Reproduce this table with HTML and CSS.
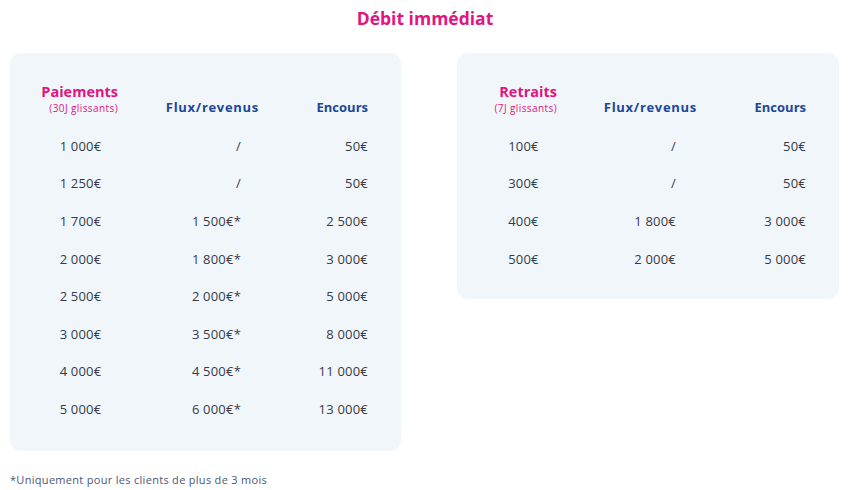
FILE: index.html
```html
<!DOCTYPE html>
<html lang="fr">
<head>
<meta charset="utf-8">
<title>Débit immédiat</title>
<link rel="stylesheet" href="styles.css">
</head>
<body>
<h1 class="title">Débit immédiat</h1>
<div class="cards">
  <section class="card card-left">
    <div class="grid">
      <div class="hcell h1"><span class="hmain">Paiements</span><span class="hsub">(30J glissants)</span></div>
      <div class="hcell h2">Flux/revenus</div>
      <div class="hcell h3">Encours</div>

      <div class="c1">1 000€</div><div class="c2">/</div><div class="c3">50€</div>
      <div class="c1">1 250€</div><div class="c2">/</div><div class="c3">50€</div>
      <div class="c1">1 700€</div><div class="c2">1 500€*</div><div class="c3">2 500€</div>
      <div class="c1">2 000€</div><div class="c2">1 800€*</div><div class="c3">3 000€</div>
      <div class="c1">2 500€</div><div class="c2">2 000€*</div><div class="c3">5 000€</div>
      <div class="c1">3 000€</div><div class="c2">3 500€*</div><div class="c3">8 000€</div>
      <div class="c1">4 000€</div><div class="c2">4 500€*</div><div class="c3">11 000€</div>
      <div class="c1">5 000€</div><div class="c2">6 000€*</div><div class="c3">13 000€</div>
    </div>
  </section>
  <section class="card card-right">
    <div class="grid">
      <div class="hcell h1"><span class="hmain">Retraits</span><span class="hsub">(7J glissants)</span></div>
      <div class="hcell h2">Flux/revenus</div>
      <div class="hcell h3">Encours</div>

      <div class="c1">100€</div><div class="c2">/</div><div class="c3">50€</div>
      <div class="c1">300€</div><div class="c2">/</div><div class="c3">50€</div>
      <div class="c1">400€</div><div class="c2">1 800€</div><div class="c3">3 000€</div>
      <div class="c1">500€</div><div class="c2">2 000€</div><div class="c3">5 000€</div>
    </div>
  </section>
</div>
<p class="note">*Uniquement pour les clients de plus de 3 mois</p>
</body>
</html>
```
FILE: styles.css
```css
* { box-sizing: border-box; }
html, body { margin: 0; padding: 0; background: #ffffff; }
body {
  font-family: "Open Sans", "Noto Sans", "Liberation Sans", sans-serif;
  width: 850px;
  height: 490px;
  overflow: hidden;
}
.title {
  margin: 0;
  padding-top: 7px;
  height: 53px;
  text-align: center;
  font-size: 17.5px;
  line-height: 22px;
  font-weight: 700;
  color: #e2147f;
}
.cards {
  display: flex;
  align-items: flex-start;
  gap: 56px;
  padding-left: 10px;
}
.card {
  background: #f1f6fb;
  border-radius: 11px;
  padding: 30px 33px 23px 0;
}
.card-left { width: 391px; }
.card-right { width: 382px; padding-bottom: 22px; }

.grid {
  display: grid;
  grid-auto-rows: 37.6px;
  grid-template-rows: 44px;
  font-size: 13px;
  letter-spacing: 0.2px;
  color: #343a4a;
  font-weight: 500;
}
.card-left .grid { grid-template-columns: 141px 108px 109px; }
.card-right .grid { grid-template-columns: 133px 107px 109px; }

.hcell {
  align-self: start;
  font-weight: 700;
  color: #1d4797;
  font-size: 13px;
  line-height: 16px;
  letter-spacing: 0;
}
.h1 {
  display: flex;
  flex-direction: column;
  align-items: flex-end;
  padding-right: 33px;
}
.hmain {
  color: #e2147f;
  font-size: 14.5px;
  line-height: 18px;
}
.hsub {
  color: #e2147f;
  font-size: 10px;
  line-height: 14px;
  font-weight: 400;
  letter-spacing: 0.4px;
}
.h2, .h3 {
  text-align: right;
  padding-top: 16px;
}
.h2 { letter-spacing: 0.7px; }
.c1, .c2, .c3 {
  display: flex;
  align-items: center;
  line-height: 16px;
}
.c1 { justify-content: center; }
.c2 { justify-content: flex-end; padding-right: 18px; }
.card-right .c2 { padding-right: 21px; }
.c3 { justify-content: flex-end; }

.note {
  margin: 22px 0 0 10px;
  font-size: 11px;
  line-height: 14px;
  letter-spacing: 0.3px;
  color: #4b5679;
}
```
